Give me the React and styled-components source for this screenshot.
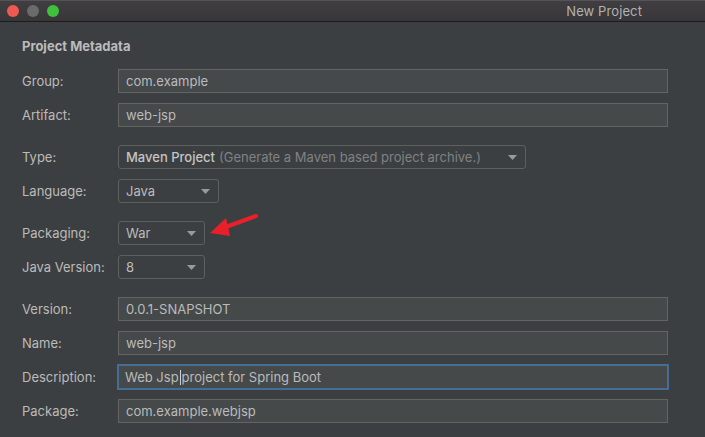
import React from 'react';
import styled, { createGlobalStyle } from 'styled-components';

const GlobalStyle = createGlobalStyle`
  html, body {
    margin: 0;
    padding: 0;
    background: #3c3f41;
  }
  body {
    font-family: Inter, "Noto Sans", "Liberation Sans", sans-serif;
    -webkit-font-smoothing: antialiased;
  }
`;

const Window = styled.div`
  width: 705px;
  height: 437px;
  display: flex;
  flex-direction: column;
  background: #3c3f41;
  overflow: hidden;
`;

const TitleBar = styled.div`
  height: 20px;
  display: flex;
  align-items: center;
  justify-content: space-between;
  padding: 0 63px 0 7px;
  background: linear-gradient(#403e40, #383638);
  border-top: 1px solid #555355;
  border-bottom: 1px solid #1c1c1c;
  flex-shrink: 0;
`;

const Lights = styled.div`
  display: flex;
  gap: 8px;
`;

const Light = styled.span`
  width: 12px;
  height: 12px;
  border-radius: 50%;
  background: ${p => p.color};
`;

const WindowTitle = styled.span`
  color: #b2b2b2;
  font-size: 13px;
  letter-spacing: 0.1px;
`;

const Content = styled.div`
  padding: 16px 37px 0 22px;
`;

const Heading = styled.h2`
  margin: 0 0 15px;
  font-size: 13px;
  font-weight: 700;
  line-height: 16px;
  color: #bbbbbb;
`;

const Form = styled.div`
  display: flex;
  flex-direction: column;
  gap: 18px;
`;

const Section = styled.div`
  display: flex;
  flex-direction: column;
  gap: 10px;
`;

const Row = styled.div`
  position: relative;
  display: grid;
  grid-template-columns: 96px 1fr;
  align-items: center;
`;

const Label = styled.label`
  font-size: 13px;
  color: #bbbbbb;
`;

const Field = styled.div`
  box-sizing: border-box;
  height: 24px;
  width: ${p => (p.w ? `${p.w}px` : '100%')};
  display: flex;
  align-items: center;
  padding: 0 8px 0 7px;
  background: #45494a;
  border: 1px solid #646464;
  font-size: 13px;
  color: #bbbbbb;
  white-space: nowrap;
  ${p => p.focused && `
    border: 2px solid #466d94;
    margin: -1px 0 -1px -1px;
    width: calc(100% + 2px);
    height: 26px;
    padding-left: 6px;
  `}
`;

const Select = styled(Field)`
  justify-content: space-between;
  background: #3c3f41;
  border-radius: 3px;
  border-color: #5e6060;
`;

const Hint = styled.span`
  color: #7f8283;
  margin-left: 4px;
`;

const Strong = styled.span`
  font-weight: 500;
  color: #c4c4c4;
`;

const Caret = styled.span`
  display: inline-block;
  width: 1px;
  height: 15px;
  background: #cfcfcf;
  margin: 0 1px 0 1px;
`;

const Arrow = styled.svg`
  position: absolute;
  left: 186px;
  top: -7px;
  overflow: visible;
`;

const DropTriangle = () => (
  <svg width="9" height="5" viewBox="0 0 9 5">
    <path d="M0 0h9L4.5 5z" fill="#9a9a9a" />
  </svg>
);

const TextRow = ({ label, value, focused }) => (
  <Row>
    <Label>{label}</Label>
    <Field focused={focused}>{value}</Field>
  </Row>
);

const SelectRow = ({ label, width, children, extra }) => (
  <Row>
    <Label>{label}</Label>
    <Select w={width}>
      <span>{children}</span>
      <DropTriangle />
    </Select>
    {extra}
  </Row>
);

export default function App() {
  return (
    <>
      <GlobalStyle />
      <Window>
        <TitleBar>
          <Lights>
            <Light color="#ee5a52" />
            <Light color="#6b6b6b" />
            <Light color="#3fc13f" />
          </Lights>
          <WindowTitle>New Project</WindowTitle>
        </TitleBar>
        <Content>
          <Heading>Project Metadata</Heading>
          <Form>
            <Section>
              <TextRow label="Group:" value="com.example" />
              <TextRow label="Artifact:" value="web-jsp" />
            </Section>
            <Section>
              <SelectRow label="Type:" width={408}>
                <Strong>Maven Project</Strong>
                <Hint>(Generate a Maven based project archive.)</Hint>
              </SelectRow>
              <SelectRow label="Language:" width={101}>Java</SelectRow>
            </Section>
            <Section>
              <SelectRow
                label="Packaging:"
                width={87}
                extra={
                  <Arrow width="52" height="26" viewBox="0 0 52 26">
                    <path d="M48 2L15 14" stroke="#e8202a" strokeWidth="4" strokeLinecap="round" />
                    <path d="M2 19L18 4L22 22z" fill="#e8202a" />
                  </Arrow>
                }
              >
                War
              </SelectRow>
              <SelectRow label="Java Version:" width={87}>8</SelectRow>
            </Section>
            <Section>
              <TextRow label="Version:" value="0.0.1-SNAPSHOT" />
              <TextRow label="Name:" value="web-jsp" />
              <TextRow
                label="Description:"
                focused
                value={<>Web Jsp<Caret />project for Spring Boot</>}
              />
              <TextRow label="Package:" value="com.example.webjsp" />
            </Section>
          </Form>
        </Content>
      </Window>
    </>
  );
}
